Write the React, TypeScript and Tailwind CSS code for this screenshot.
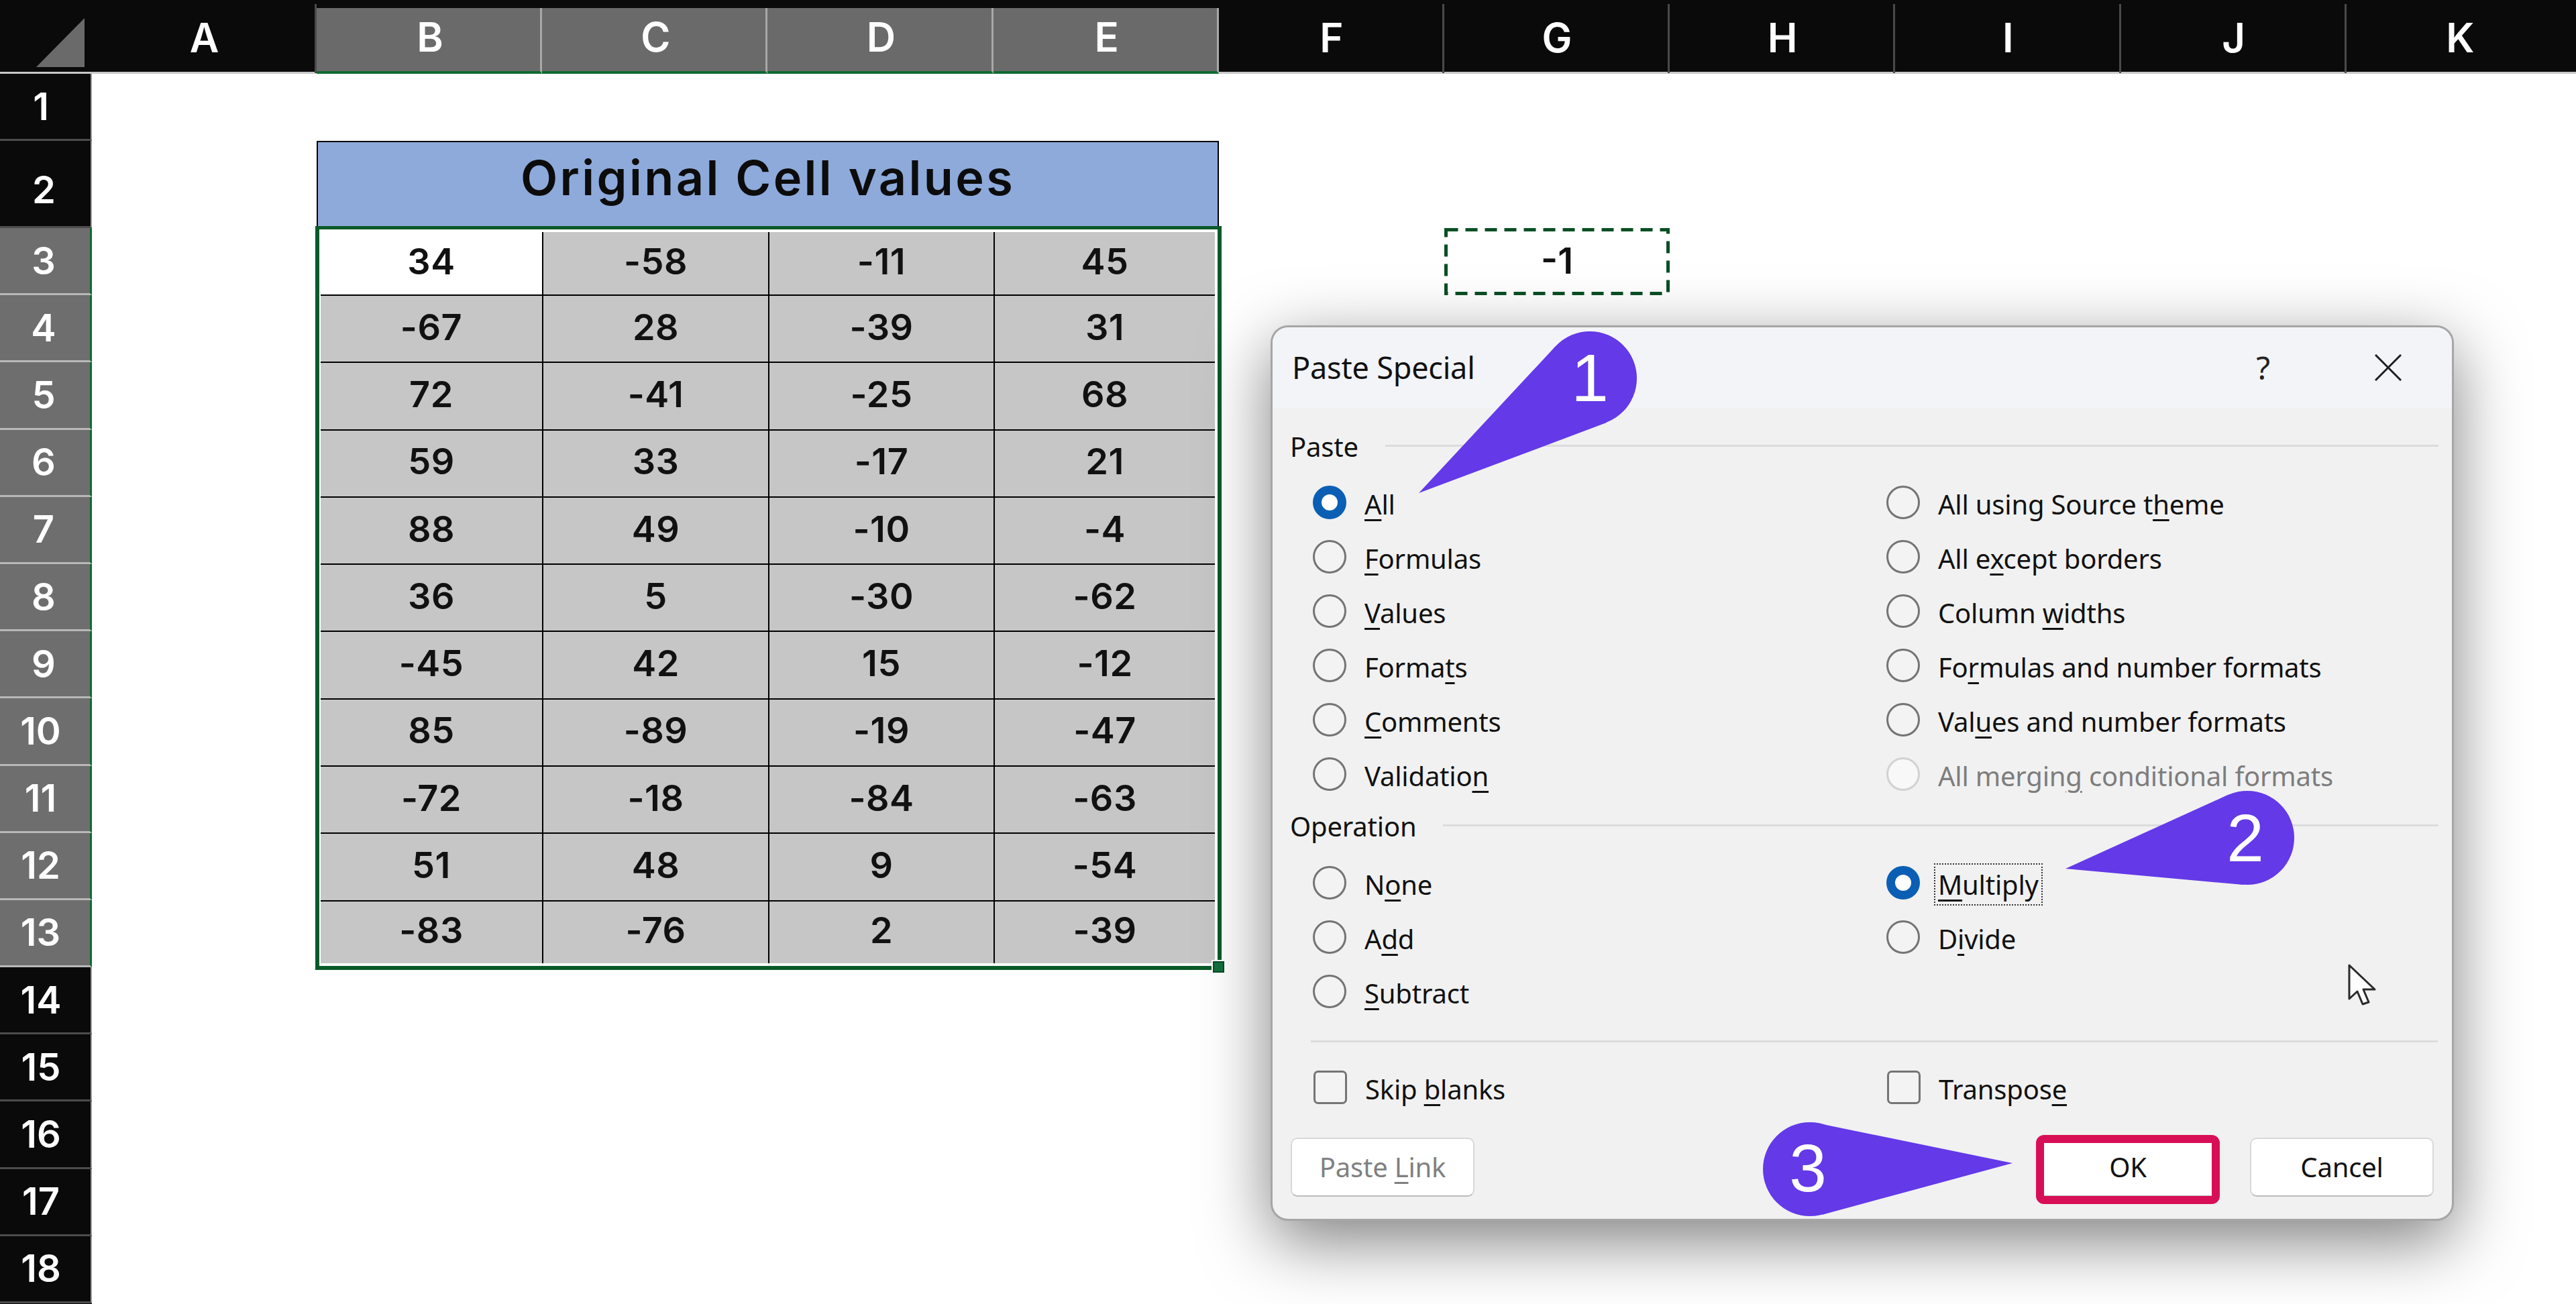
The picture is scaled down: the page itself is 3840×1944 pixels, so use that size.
import React from "react";

const dataRows = [
  ["34", "-58", "-11", "45"],
  ["-67", "28", "-39", "31"],
  ["72", "-41", "-25", "68"],
  ["59", "33", "-17", "21"],
  ["88", "49", "-10", "-4"],
  ["36", "5", "-30", "-62"],
  ["-45", "42", "15", "-12"],
  ["85", "-89", "-19", "-47"],
  ["-72", "-18", "-84", "-63"],
  ["51", "48", "9", "-54"],
  ["-83", "-76", "2", "-39"],
];

const columns = ["A", "B", "C", "D", "E", "F", "G", "H", "I", "J", "K", ""];
const rowNumbers = Array.from({ length: 18 }, (_, i) => i + 1);

function ColumnHeader({ label, index }: { label: string; index: number }) {
  const selected = label === "B" || label === "C" || label === "D" || label === "E";
  const width = index === 0 ? "w-[335px]" : index === 11 ? "flex-1" : "w-[336.2px]";
  if (selected) {
    return (
      <div className={`${width} mt-3 flex items-center justify-center bg-[#6a6a6a] border-r-[3px] border-r-[#a8a8a8] border-b-[4px] border-b-[#0f6a33] pb-2 pl-[5px]`}>
        <span className="text-[60px] font-semibold text-white">{label}</span>
      </div>
    );
  }
  return (
    <div className={`${width} flex items-center justify-center border-b-[3px] border-b-[#c8c8c8] pb-1`}>
      <div className={`flex h-full w-full items-center justify-center pl-[3px] pt-1 pb-2 ${label === "K" || label === "" ? "" : "border-r-[3px] border-r-[#4a4a4a]"} mt-3`}>
        <span className="text-[60px] font-semibold text-white">{label}</span>
      </div>
    </div>
  );
}

function RowHeader({ n }: { n: number }) {
  const selected = n >= 3 && n <= 13;
  const height = n === 1 ? "h-[100px]" : n === 2 ? "h-[130px] pt-[18px]" : "h-[100.2px]";
  const offset = n >= 2 && n <= 9 ? "pr-[4px]" : "pr-[13px]";
  return (
    <div
      className={`${height} ${offset} flex items-center justify-center ${
        selected
          ? "bg-[#6e6e6e] border-r-[3px] border-r-[#0f6a33] border-b-[3px] border-b-[#b8b8b8]"
          : "border-r-[2px] border-r-[#9a9a9a] border-b-[3px] border-b-[#4c4c4c]"
      }`}
    >
      <span className="text-[56px] font-semibold leading-none text-white">{n}</span>
    </div>
  );
}

function DataTable() {
  return (
    <div className="w-[1351px] shrink-0">
      <div className="ml-[2px] flex h-[127px] w-[1345px] items-center justify-center border-x-2 border-t-2 border-black bg-[#8eaadb] pb-5">
        <span className="text-[72px] font-semibold tracking-[3.4px] text-[#0c0c0c]">Original Cell values</span>
      </div>
      <div className="relative border-x-[6px] border-t-[5px] border-b-[6px] border-[#0a5a2a] bg-white pl-[2px] pr-[4px] py-[4px]">
        <div className="grid grid-cols-[332px_337px_336px_328px] grid-rows-[95px_repeat(9,100.3px)_92.3px]">
          {dataRows.map((row, r) =>
            row.map((value, c) => (
              <div
                key={`${r}-${c}`}
                className={`flex items-center justify-center pb-[6px] text-[54px] font-semibold tracking-[0.5px] text-[#111] ${
                  r === 0 && c === 0 ? "bg-white" : "bg-[#c6c6c6]"
                } ${c < 3 ? "border-r-2 border-r-black" : ""} ${r < 10 ? "border-b-2 border-b-black" : ""}`}
              >
                {value}
              </div>
            )),
          )}
        </div>
        <div className="absolute -right-[10px] -bottom-[10px] h-[17px] w-[17px] border-2 border-[#0a4a24] bg-[#14703e] outline-2 outline-white" />
      </div>
    </div>
  );
}

function CopiedCell() {
  return (
    <div className="relative ml-[332px] mt-[130px] flex h-[100px] w-[336px] shrink-0 items-center justify-center pb-1 text-[54px] font-semibold text-[#111]">
      -1
      <svg className="absolute inset-0" width="336" height="100" viewBox="0 0 336 100" fill="none">
        <rect x="2.5" y="2.5" width="331" height="95" stroke="#0a4f25" strokeWidth="5" strokeDasharray="18 11" />
      </svg>
    </div>
  );
}

type Opt = { before: string; key_: string; after: string; checked?: boolean; disabled?: boolean; focus?: boolean };

const o = (before: string, key_: string, after: string, extra: Partial<Opt> = {}): Opt => ({ before, key_, after, ...extra });

function Label({ opt }: { opt: Opt }) {
  return (
    <span
      className={`${opt.disabled ? "text-[#7d7d7d]" : "text-[#111]"} ${
        opt.focus ? "-ml-[6px] -mr-[6px] -mt-[4px] border-2 border-dotted border-[#333] px-[4px] py-[2px] leading-[58px]" : ""
      }`}
    >
      {opt.before}
      <span className="underline decoration-[3px] underline-offset-[7px]">{opt.key_}</span>
      {opt.after}
    </span>
  );
}

function RadioOption({ opt }: { opt: Opt | null }) {
  if (!opt) return <div className="h-[81px]" />;
  const circle = opt.checked
    ? "border-[13px] border-[#0a5fb4] bg-white"
    : opt.disabled
      ? "border-[3px] border-[#d2d2d2] bg-[#f8f8f8]"
      : "border-[3px] border-[#747474] bg-[#f3f3f3]";
  return (
    <div className="flex h-[81px] items-center">
      <div className={`h-[50px] w-[50px] shrink-0 rounded-full ${circle}`} />
      <div className="ml-[27px] pt-[6px]">
        <Label opt={opt} />
      </div>
    </div>
  );
}

function SectionHeading({ title }: { title: string }) {
  return (
    <div className="flex h-[60px] items-center gap-10 pl-[26px] pr-[20px]">
      <span className="pt-[3px] text-[#111]">{title}</span>
      <div className="h-[3px] flex-1 bg-[#dcdcdc]" />
    </div>
  );
}

function OptionGrid({ rows }: { rows: [Opt, Opt | null][] }) {
  return (
    <div className="grid grid-cols-[855px_1fr] pl-[60px]">
      {rows.map(([a, b], i) => (
        <React.Fragment key={i}>
          <RadioOption opt={a} />
          <RadioOption opt={b} />
        </React.Fragment>
      ))}
    </div>
  );
}

function CheckOption({ opt }: { opt: Opt }) {
  return (
    <div className="flex h-[81px] items-center">
      <div className="h-[50px] w-[50px] shrink-0 rounded-[7px] border-[3px] border-[#747474] bg-[#f3f3f3]" />
      <div className="ml-[27px] pt-[6px]">
        <Label opt={opt} />
      </div>
    </div>
  );
}

function DialogButton({ children, muted }: { children: React.ReactNode; muted?: boolean }) {
  return (
    <div
      className={`flex h-[88px] w-[274px] items-center justify-center rounded-[10px] border-2 border-[#d8d8d8] border-b-[#bcbcbc] bg-white ${
        muted ? "text-[#808080]" : "text-[#111]"
      }`}
    >
      {children}
    </div>
  );
}

const pasteRows: [Opt, Opt | null][] = [
  [o("", "A", "ll", { checked: true }), o("All using Source t", "h", "eme")],
  [o("", "F", "ormulas"), o("All e", "x", "cept borders")],
  [o("", "V", "alues"), o("Column ", "w", "idths")],
  [o("Forma", "t", "s"), o("Fo", "r", "mulas and number formats")],
  [o("", "C", "omments"), o("Val", "u", "es and number formats")],
  [o("Validatio", "n", ""), o("All mergin", "g", " conditional formats", { disabled: true })],
];

const operationRows: [Opt, Opt | null][] = [
  [o("N", "o", "ne"), o("", "M", "ultiply", { checked: true, focus: true })],
  [o("A", "d", "d"), o("D", "i", "vide")],
  [o("", "S", "ubtract"), null],
];

function PasteSpecialDialog() {
  return (
    <div className="absolute left-[1894px] top-[485px] h-[1335px] w-[1764px] overflow-visible rounded-[26px] border-[3px] border-[#a6a6a6] bg-[#f1f1f1] text-[40px] tracking-[-0.2px] shadow-[0_30px_100px_rgba(0,0,0,0.5)] font-['Noto_Sans',sans-serif]">
      <div className="flex h-[120px] items-center rounded-t-[24px] bg-[#f3f4f8] pl-[29px] pr-[75px]">
        <span className="flex-1 text-[45px] text-[#111]">Paste Special</span>
        <span className="mr-[156px] text-[48px] text-[#222]">?</span>
        <svg width="40" height="40" viewBox="0 0 40 40" fill="none" stroke="#1c1c1c" strokeWidth="3">
          <path d="M1 1 39 39M39 1 1 39" />
        </svg>
      </div>
      <div className="mt-[26px]">
        <SectionHeading title="Paste" />
      </div>
      <div className="mt-[14px]">
        <OptionGrid rows={pasteRows} />
      </div>
      <div className="mt-[6px]">
        <SectionHeading title="Operation" />
      </div>
      <div className="mt-[15px]">
        <OptionGrid rows={operationRows} />
      </div>
      <div className="ml-[57px] mr-[21px] mt-[33px] h-[3px] bg-[#dcdcdc]" />
      <div className="mt-[26px] grid grid-cols-[855px_1fr] pl-[61px]">
        <CheckOption opt={o("Skip ", "b", "lanks")} />
        <CheckOption opt={o("Transpos", "e", "")} />
      </div>
      <div className="mt-[35px] flex items-center pl-[27px] pr-[27px]">
        <DialogButton muted>
          <span>
            Paste <span className="underline decoration-[3px] underline-offset-[7px]">L</span>ink
          </span>
        </DialogButton>
        <div className="flex-1" />
        <div className="relative mr-[45px]">
          <DialogButton>OK</DialogButton>
          <div className="absolute -bottom-[11px] -top-[4px] left-0 right-0 rounded-[12px] border-[12px] border-[#d80f56]" />
        </div>
        <DialogButton>Cancel</DialogButton>
      </div>
    </div>
  );
}

function Annotations() {
  return (
    <svg className="pointer-events-none absolute left-0 top-0" width="3840" height="1944" viewBox="0 0 3840 1944">
      <g fill="#6339e8">
        <circle cx="2370" cy="564" r="70" />
        <polygon points="2115,735 2319,516 2395,630" />
        <circle cx="3350" cy="1249" r="70" />
        <polygon points="3079,1295 3321,1185 3344,1319" />
        <circle cx="2698" cy="1743" r="70" />
        <polygon points="3000,1734 2712,1675 2716,1811" />
      </g>
      <g className="fill-white text-[100px] font-['Liberation_Sans',sans-serif]" textAnchor="middle">
        <text x="2370" y="598">1</text>
        <text x="3347" y="1284">2</text>
        <text x="2695" y="1776">3</text>
      </g>
      <path
        d="M3502 1439 3502 1489 3514 1478 3522 1497 3531 1494 3523 1475 3540 1475Z"
        fill="#fff"
        stroke="#2a2a2a"
        strokeWidth="3"
        strokeLinejoin="round"
      />
    </svg>
  );
}

export default function App() {
  return (
    <div className="relative h-[1944px] w-[3840px] overflow-hidden bg-white font-['Inter',sans-serif]">
      <div className="flex h-[110px] bg-[#0a0a0a]">
        <div className="flex w-[137px] shrink-0 border-b-[3px] border-b-[#c8c8c8] pt-[27px] pl-[54px]">
          <svg width="72" height="73" viewBox="0 0 72 73">
            <polygon points="72,0 72,73 0,73" fill="#6a6a6a" />
          </svg>
        </div>
        {columns.map((c, i) => (
          <ColumnHeader key={i} label={c} index={i} />
        ))}
      </div>
      <div className="flex h-[1834px]">
        <div className="w-[137px] shrink-0 bg-[#0a0a0a]">
          {rowNumbers.map((n) => (
            <RowHeader key={n} n={n} />
          ))}
        </div>
        <div className="flex flex-1 items-start pl-[333px] pt-[100px]">
          <DataTable />
          <CopiedCell />
        </div>
      </div>
      <PasteSpecialDialog />
      <Annotations />
    </div>
  );
}
